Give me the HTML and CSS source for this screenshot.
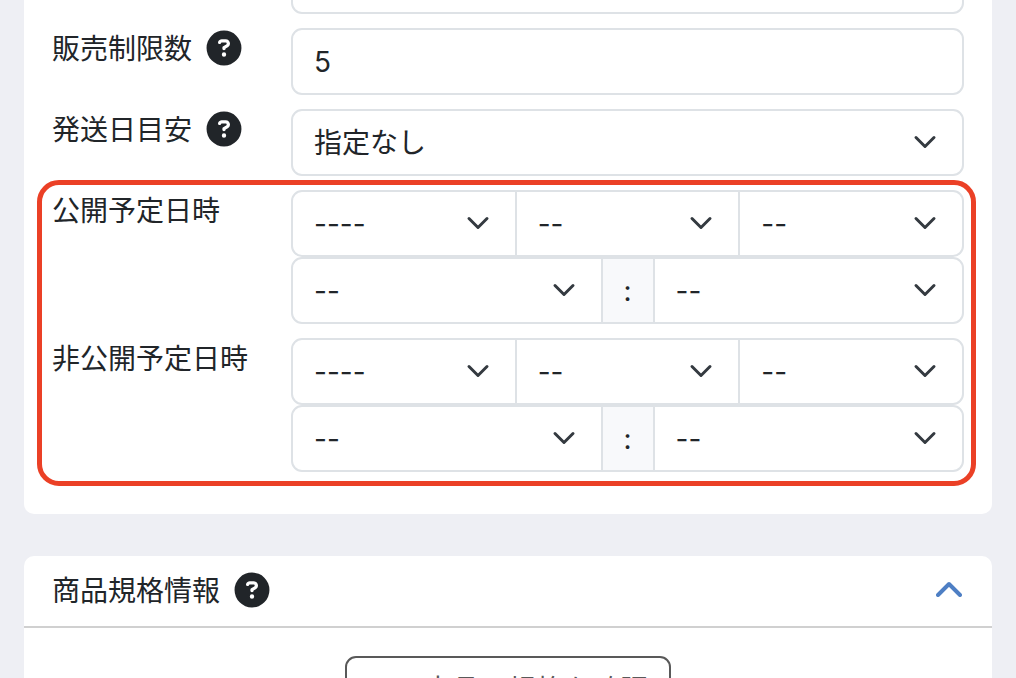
FILE: index.html
```html
<!DOCTYPE html>
<html lang="ja">
<head>
<meta charset="utf-8">
<meta name="viewport" content="width=device-width, initial-scale=1">
<title>商品登録</title>
<link rel="stylesheet" href="styles.css">
</head>
<body>
<svg class="sprite" aria-hidden="true">
  <symbol id="help" viewBox="-8 -8 528 528"><path d="M256 512A256 256 0 1 0 256 0a256 256 0 1 0 0 512zM169.8 165.3c7.9-22.3 29.1-37.3 52.8-37.3h58.3c34.9 0 63.1 28.3 63.1 63.1c0 22.6-12.1 43.5-31.7 54.8L280 264.4c-.2 13-10.9 23.6-24 23.6c-13.3 0-24-10.7-24-24V250.5c0-8.6 4.6-16.5 12.1-20.8l44.3-25.4c4.7-2.7 7.6-7.7 7.6-13.1c0-8.4-6.8-15.1-15.1-15.1H222.6c-3.4 0-6.4 2.1-7.5 5.3l-.4 1.2c-4.4 12.5-18.2 19-30.6 14.6s-19-18.2-14.6-30.6l.4-1.2zM224 352a32 32 0 1 1 64 0 32 32 0 1 1 -64 0z"/></symbol>
</svg>
<main class="page">
  <section class="card card-fields">
    <div class="row">
      <span></span>
      <input class="control" type="text" aria-label="商品情報">
    </div>
    <div class="row">
      <div class="label"><label for="limit">販売制限数</label><svg class="help"><use href="#help"/></svg></div>
      <input class="control" id="limit" type="text" value="5">
    </div>
    <div class="row">
      <div class="label"><label for="delivery">発送日目安</label><svg class="help"><use href="#help"/></svg></div>
      <select class="control select" id="delivery"><option>指定なし</option></select>
    </div>
    <div class="highlight">
      <div class="row">
        <div class="label"><label for="open-year">公開予定日時</label></div>
        <div>
          <div class="group">
            <select class="control select" id="open-year"><option>----</option></select>
            <select class="control select" aria-label="公開 月"><option>--</option></select>
            <select class="control select" aria-label="公開 日"><option>--</option></select>
          </div>
          <div class="group">
            <select class="control select" aria-label="公開 時"><option>--</option></select>
            <span class="addon">:</span>
            <select class="control select" aria-label="公開 分"><option>--</option></select>
          </div>
        </div>
      </div>
      <div class="row">
        <div class="label"><label for="close-year">非公開予定日時</label></div>
        <div>
          <div class="group">
            <select class="control select" id="close-year"><option>----</option></select>
            <select class="control select" aria-label="非公開 月"><option>--</option></select>
            <select class="control select" aria-label="非公開 日"><option>--</option></select>
          </div>
          <div class="group">
            <select class="control select" aria-label="非公開 時"><option>--</option></select>
            <span class="addon">:</span>
            <select class="control select" aria-label="非公開 分"><option>--</option></select>
          </div>
        </div>
      </div>
    </div>
  </section>
  <section class="card">
    <header class="card-header">
      <div class="label"><span>商品規格情報</span><svg class="help"><use href="#help"/></svg></div>
      <button class="toggle" type="button" aria-label="閉じる"><svg class="chevron" viewBox="0 0 26 16"><path d="M2 14 13 3l11 11"/></svg></button>
    </header>
    <div class="card-body">
      <button class="outline-button" type="button">この商品の規格を確認</button>
    </div>
  </section>
</main>
</body>
</html>
```

FILE: styles.css
```css
* { box-sizing: border-box; }

body {
  margin: 0;
  height: 100vh;
  overflow: hidden;
  background: #eeeff4;
  color: #212529;
  font: 28px/40px Inter, "Noto Sans CJK JP", sans-serif;
}

.sprite { display: none; }

.page {
  display: flex;
  flex-direction: column;
  gap: 42px;
  margin-top: -53px;
  padding: 0 24px;
}

.card {
  background: #fff;
  border-radius: 10px;
}

.card-fields,
.highlight {
  display: flex;
  flex-direction: column;
  gap: 14px;
}

.card-fields { padding: 0 28px 42px; }

.row {
  display: grid;
  grid-template-columns: 239px minmax(0, 1fr);
  align-items: start;
}

.label {
  display: flex;
  align-items: flex-start;
  gap: 14px;
  line-height: 42px;
}

.help {
  width: 36px;
  height: 36px;
  margin-top: 2px;
  fill: #212529;
}

.control {
  width: 100%;
  height: 67px;
  margin: 0;
  padding: 0 21px;
  border: 2px solid #dee2e6;
  border-radius: 11px;
  background-color: #fff;
  color: inherit;
  font: inherit;
}

.select {
  appearance: none;
  background-image: url("data:image/svg+xml,%3Csvg xmlns='http://www.w3.org/2000/svg' viewBox='0 0 16 16'%3E%3Cpath fill='none' stroke='%23343a40' stroke-linecap='round' stroke-linejoin='round' stroke-width='2' d='m2 5 6 6 6-6'/%3E%3C/svg%3E");
  background-repeat: no-repeat;
  background-position: right 25px top 19px;
  background-size: 24px 24px;
}

.group { display: flex; }

.group .select {
  flex: 1;
  width: 0;
}

.group > :not(:first-child) {
  margin-left: -2px;
  border-top-left-radius: 0;
  border-bottom-left-radius: 0;
}

.group > :not(:last-child) {
  border-top-right-radius: 0;
  border-bottom-right-radius: 0;
}

.addon {
  display: flex;
  align-items: center;
  justify-content: center;
  width: 54px;
  border: 2px solid #dee2e6;
  background: #f8f9fb;
}

.highlight { position: relative; }

/* Red frame drawn around the schedule fields */
.highlight::after {
  content: "";
  position: absolute;
  inset: -10px -12px -14px -15px;
  border: 5px solid #eb4026;
  border-radius: 22px;
  pointer-events: none;
}

.card-header {
  display: flex;
  align-items: center;
  justify-content: space-between;
  height: 72px;
  padding: 0 30px 0 28px;
  border-bottom: 2px solid #d0d0d0;
}

.toggle {
  display: flex;
  padding: 0 0 4px;
  border: 0;
  background: none;
}

.chevron {
  width: 26px;
  height: 16px;
  fill: none;
  stroke: #4e7fc4;
  stroke-width: 4;
  stroke-linecap: round;
  stroke-linejoin: round;
}

.card-body {
  display: flex;
  justify-content: center;
  padding: 28px;
}

.outline-button {
  padding: 12px 21px;
  border: 2px solid #595959;
  border-radius: 11px;
  background: #fff;
  color: #595959;
  font: inherit;
}
```
